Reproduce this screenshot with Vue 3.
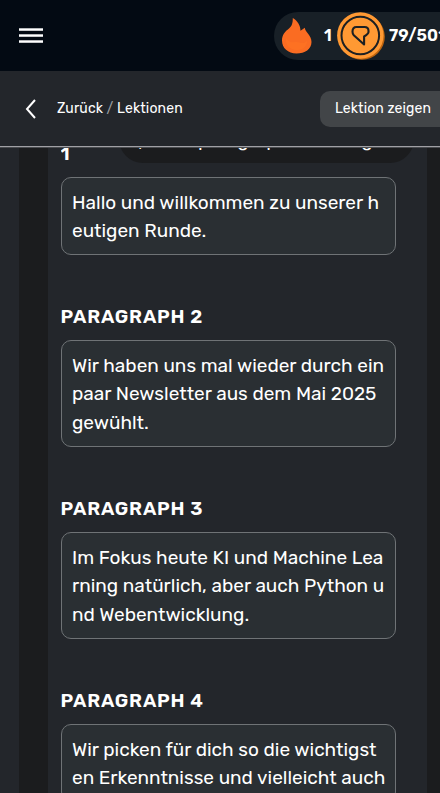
<script setup>
const paragraphs = [
  { id: 1, lines: ['Hallo und willkommen zu unserer h', 'eutigen Runde.'] },
  { id: 2, lines: ['Wir haben uns mal wieder durch ein', 'paar Newsletter aus dem Mai 2025', 'gewühlt.'] },
  { id: 3, lines: ['Im Fokus heute KI und Machine Lea', 'rning natürlich, aber auch Python u', 'nd Webentwicklung.'] },
  { id: 4, lines: ['Wir picken für dich so die wichtigst', 'en Erkenntnisse und vielleicht auch'] },
]
</script>

<template>
  <div class="screen">
    <header class="topbar">
      <button class="burger" aria-label="Menü"><i></i><i></i><i></i></button>
      <div class="stats">
        <svg class="flame" viewBox="0 0 30 36">
          <path fill="#fa6c22" d="M10.800 0c4.400 2.600 7.700 7.200 7.700 12.800l4.300-3c.5 4.700 6.700 7.400 6.700 14.200C29.500 31 23 35.500 14.500 35.500S0 30 0 22.500C0 17 3 13.500 7 10.500 10 8 10.800 5 10.800 0Z" />
          <path fill="#ff7524" opacity=".65" d="M4 20c-1 8 5 12 11 12s10-4 10-9c-4 4-8 1-11 1s-6 2-10-4Z" />
        </svg>
        <span class="streak">1</span>
        <svg class="coin" viewBox="0 0 48 48">
          <circle cx="24.800" cy="24.800" r="23" fill="#bd640f" />
          <circle cx="23.300" cy="23.500" r="23.200" fill="#ff9933" />
          <circle cx="23.300" cy="23.500" r="18.800" fill="none" stroke="#1c2023" stroke-width="2" />
          <path fill="none" stroke="#1c2023" stroke-width="2.100" stroke-linejoin="round" d="M19.500 15h8q4 0 4 3.800v1.200q0 1.800-4.400 4.500v8L16.800 23.200q-1.300-1.400-1.300-3.400 0-4.800 4-4.800Z" />
        </svg>
        <span class="score">79/501</span>
      </div>
    </header>
    <nav class="crumbs">
      <svg class="back" viewBox="0 0 12 20"><path d="M10 1 2 10l8 9" fill="none" stroke="#fff" stroke-width="2" /></svg>
      <div class="trail">Zurück <span>/</span> Lektionen</div>
      <button class="show">Lektion zeigen</button>
    </nav>
    <main class="viewport">
      <div class="panel">
        <section v-for="p in paragraphs" :key="p.id" :class="{ first: p.id === 1 }">
          <div v-if="p.id === 1" class="top">
            <h2>1</h2>
            <div class="pill"><span class="plus">+</span><span class="lead">Neu</span><span>paragraph hinzufügen</span></div>
          </div>
          <h2 v-else>PARAGRAPH {{ p.id }}</h2>
          <div class="box">
            <div v-for="l in p.lines" :key="l" class="line">{{ l }}</div>
          </div>
        </section>
      </div>
    </main>
  </div>
</template>

<style>
body { background: #23262b; overflow: hidden; }
</style>
<style scoped>
* { box-sizing: border-box; }
.screen { width: 440px; height: 793px; overflow: hidden; display: flex; flex-direction: column; background: #23262b; color: #fff; font-family: Rubik, Roboto, sans-serif; }
button { border: 0; padding: 0; font: inherit; color: inherit; }
.topbar { flex: 0 0 71px; display: flex; align-items: center; justify-content: space-between; padding-left: 19px; background: #030a13; }
.burger { width: 24px; display: grid; gap: 3px; background: none; }
.burger i { height: 3px; background: linear-gradient(#b5b7ba 1px, #fff 1px, #fff 2px, #c8c9cb 2px); }
.stats { width: 166px; height: 48px; flex: none; display: flex; align-items: center; padding-left: 8px; border-radius: 24px 0 0 24px; background: #182027; white-space: nowrap; overflow: hidden; }
.flame { width: 30px; height: 36px; flex: none; }
.streak { width: 25px; flex: none; padding-left: 12px; font-size: 16px; font-weight: 600; }
.coin { width: 48px; height: 48px; flex: none; }
.score { padding-left: 4px; font-size: 16.500px; font-weight: 600; letter-spacing: .15px; }
.crumbs { flex: 0 0 76px; display: flex; align-items: center; padding-left: 25px; border-bottom: 1px solid #a0a0a5; }
.back { width: 12px; height: 20px; }
.trail { flex: 1; padding-left: 20px; font-size: 14px; letter-spacing: .14px; }
.trail span { color: #9a9da0; }
.show { width: 120px; height: 36px; border-radius: 10px 0 0 10px; background: #424548; font-size: 14px; letter-spacing: .1px; padding-left: 6px; }
.viewport { flex: 1; min-height: 0; overflow: hidden; padding-left: 19px; border-top: 1px solid #4a4c50; background: linear-gradient(90deg, #23262b 19px, #1b1c1e 19px); }
.panel { width: 379px; min-height: 100%; margin-left: 29px; padding: 0 31px 0 13px; background: #23262b; }
h2 { margin: 0 0 0 -.6px; font-size: 19px; line-height: 24px; font-weight: 600; letter-spacing: .8px; }
section { height: 192px; }
section.first { height: 156.600px; }
.top { display: flex; height: 29px; width: 360px; overflow: hidden; }
.top h2 { width: 58.600px; margin-top: -6px; }
.pill { display: flex; width: 295px; height: 48px; margin-top: -33px; border-radius: 24px; background: #1b1c1e; padding: 13px 0 0 13px; font-size: 19px; line-height: 24px; white-space: nowrap; }
.plus { width: 18px; font-size: 26px; font-weight: 300; line-height: 28px; }
.lead { width: 48px; }
.box { width: 335px; padding: 10.500px 10px 8.500px; border: 1px solid #6f7376; border-radius: 10px; background: #2a2f33; }
.first .box { padding: 10.500px 10px 9.500px; }
h2 + .box { margin-top: 11.800px; }
.line { height: 28.500px; line-height: 28.500px; font-size: 19px; white-space: nowrap; }
.first .line { height: 28px; }
</style>
